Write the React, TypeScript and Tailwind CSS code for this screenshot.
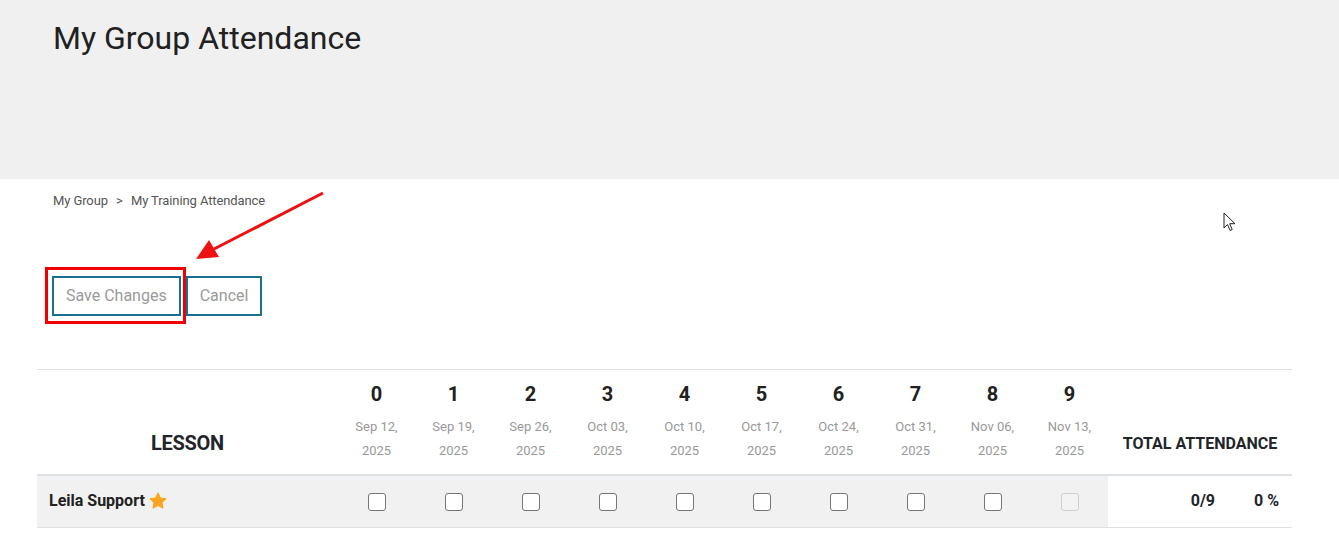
import React from 'react';

const sessions = [
  { n: 0, d: 'Sep 12,' },
  { n: 1, d: 'Sep 19,' },
  { n: 2, d: 'Sep 26,' },
  { n: 3, d: 'Oct 03,' },
  { n: 4, d: 'Oct 10,' },
  { n: 5, d: 'Oct 17,' },
  { n: 6, d: 'Oct 24,' },
  { n: 7, d: 'Oct 31,' },
  { n: 8, d: 'Nov 06,' },
  { n: 9, d: 'Nov 13,' },
];

function Box({ disabled }: { disabled?: boolean }) {
  return (
    <span
      className={
        'inline-block w-[18px] h-[18px] rounded-[3px] border align-middle ' +
        (disabled ? 'border-[#cfcfcf] bg-[#f3f3f3]' : 'border-[#767676] bg-white')
      }
    />
  );
}

export default function App() {
  return (
    <div className="relative w-[1339px] h-[533px] bg-white overflow-hidden font-['Roboto',sans-serif] text-[#212529]">
      <header className="h-[179px] bg-[#f0f0f0] px-[53px] pt-[19px]">
        <h1 className="text-[32px] leading-[38px] font-normal text-[#212121]">My Group Attendance</h1>
      </header>

      <nav className="px-[53px] pt-[14px] text-[13px] leading-[16px] text-[#555] tracking-[-0.1px]">
        My Group <span className="mx-[5px]">&gt;</span> My Training Attendance
      </nav>

      <div className="flex pl-[52px] pt-[67px]">
        <button className="h-[40px] px-[12px] border-2 border-[#17718e] text-[16px] text-[#9a9a9a]">
          Save Changes
        </button>
        <button className="h-[40px] ml-[5px] px-[12px] border-2 border-[#17718e] text-[16px] text-[#9a9a9a]">
          Cancel
        </button>
      </div>

      <div className="px-[37px] pt-[53px]">
        <table className="w-[1255px] border-collapse table-fixed">
          <colgroup>
            <col className="w-[301px]" />
            {sessions.map((s) => (
              <col key={s.n} className="w-[77px]" />
            ))}
            <col className="w-[120px]" />
            <col className="w-[64px]" />
          </colgroup>
          <thead>
            <tr className="border-t border-[#dee2e6] border-b-2">
              <th className="align-bottom pb-[19px] text-[20px] leading-[24px] font-bold tracking-[-0.3px]">LESSON</th>
              {sessions.map((s) => (
                <th key={s.n} className="align-top pt-[12px] pb-[11px] font-normal">
                  <div className="text-[20px] leading-[24px] font-bold text-[#212121]">{s.n}</div>
                  <div className="mt-[9px] text-[13px] leading-[24px] text-[#999]">
                    {s.d}
                    <br />
                    2025
                  </div>
                </th>
              ))}
              <th colSpan={2} className="align-bottom pb-[18px] text-[16px] leading-[24px] font-bold whitespace-nowrap">
                TOTAL ATTENDANCE
              </th>
            </tr>
          </thead>
          <tbody>
            <tr className="border-b border-[#dee2e6] h-[52px]">
              <td className="bg-[#f1f1f1] pl-[12px] text-[16px] font-bold text-[#212121]">
                <span className="inline-flex items-center gap-[3px]">
                  Leila Support
                  <svg width="20" height="20" viewBox="0 0 24 24" className="mt-[-1px]">
                    <path
                      d="M12 2.2l2.95 6.2 6.8.85-5 4.7 1.28 6.75L12 17.4l-6.03 3.3 1.28-6.75-5-4.7 6.8-.85z"
                      fill="#f9a520"
                      stroke="#f9a520"
                      strokeWidth="1.2"
                      strokeLinejoin="round"
                    />
                  </svg>
                </span>
              </td>
              {sessions.map((s, i) => (
                <td key={s.n} className="bg-[#f1f1f1] text-center">
                  <Box disabled={i === 9} />
                </td>
              ))}
              <td className="text-right pr-[13px] text-[16px] font-bold">0/9</td>
              <td className="text-right pr-[13px] text-[16px] font-bold">0 %</td>
            </tr>
          </tbody>
        </table>
      </div>

      {/* annotation overlay */}
      <div className="absolute left-[45px] top-[267px] w-[141px] h-[57px] border-[3px] border-[#f00000]" />
      <svg className="absolute left-0 top-0" width="1339" height="533">
        <line x1="323" y1="193" x2="214" y2="249" stroke="#ee1111" strokeWidth="3" />
        <polygon points="196,259 209,240 219,257" fill="#ee1111" />
      </svg>
      <svg className="absolute left-[1223px] top-[212px]" width="13" height="21" viewBox="0 0 13 21">
        <path d="M1 1v15l3.5-3.5 2.5 6 2.2-1-2.5-5.8H12z" fill="#fff" stroke="#222" strokeWidth="1" strokeLinejoin="round" />
      </svg>
    </div>
  );
}
